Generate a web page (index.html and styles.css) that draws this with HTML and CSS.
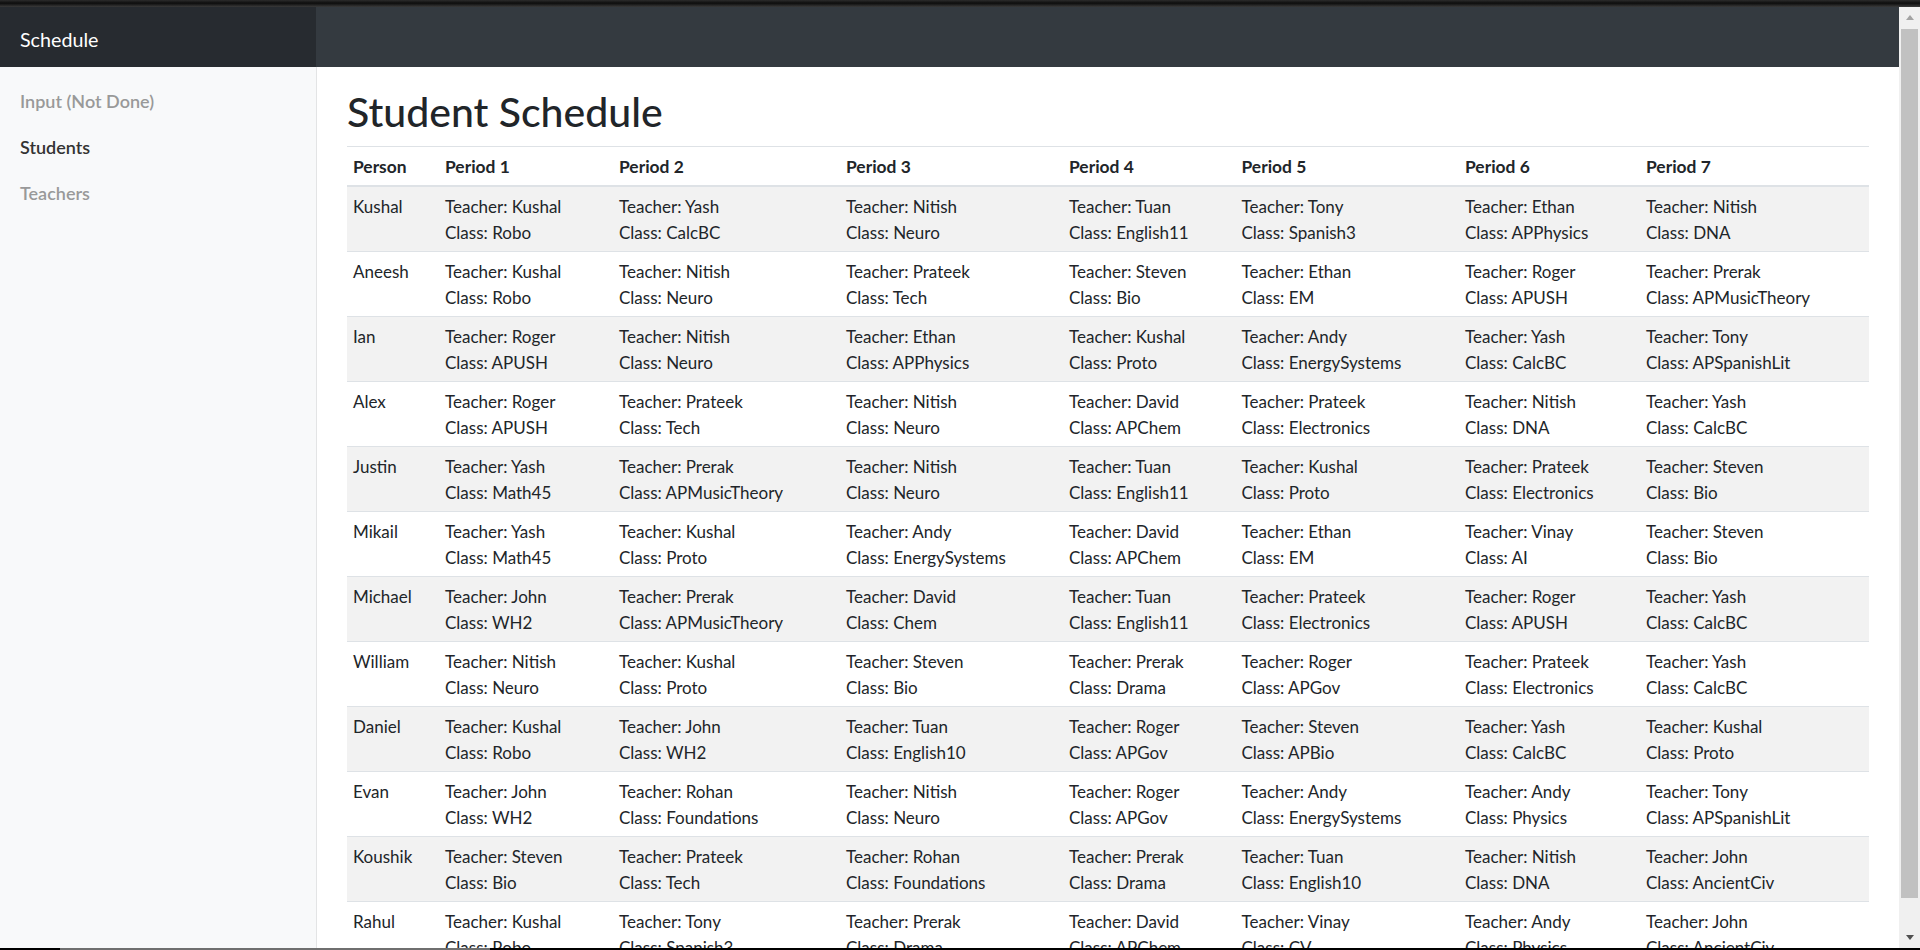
FILE: index.html
```html
<!DOCTYPE html>
<html lang="en">
<head>
  <meta charset="UTF-8" />
  <meta name="viewport" content="width=device-width, initial-scale=1.0"/>
  <title>Schedule</title>
  <link rel="stylesheet" href="styles.css">
</head>
<body>

  <div class="screen">
    <div class="frame-top"></div>

    <div class="viewport">
      <div class="page">

        <header class="navbar">
          <div class="brand">Schedule</div>
        </header>

        <div class="layout">
          <nav class="sidebar">
            <a class="nav-link" href="#">Input (Not Done)</a>
            <a class="nav-link active" href="#">Students</a>
            <a class="nav-link" href="#">Teachers</a>
          </nav>

          <main class="main">
            <h1 class="title">Student Schedule</h1>

            <table class="schedule">
              <colgroup>
                <col class="c-person">
                <col class="c-p1">
                <col class="c-p2">
                <col class="c-p3">
                <col class="c-p4">
                <col class="c-p5">
                <col class="c-p6">
                <col class="c-p7">
              </colgroup>
              <thead>
                <tr>
                  <th>Person</th>
                  <th>Period 1</th>
                  <th>Period 2</th>
                  <th>Period 3</th>
                  <th>Period 4</th>
                  <th>Period 5</th>
                  <th>Period 6</th>
                  <th>Period 7</th>
                </tr>
              </thead>
              <tbody>
                <tr>
                  <td>Kushal</td>
                  <td>Teacher: Kushal<br>Class: Robo</td>
                  <td>Teacher: Yash<br>Class: CalcBC</td>
                  <td>Teacher: Nitish<br>Class: Neuro</td>
                  <td>Teacher: Tuan<br>Class: English11</td>
                  <td>Teacher: Tony<br>Class: Spanish3</td>
                  <td>Teacher: Ethan<br>Class: APPhysics</td>
                  <td>Teacher: Nitish<br>Class: DNA</td>
                </tr>
                <tr>
                  <td>Aneesh</td>
                  <td>Teacher: Kushal<br>Class: Robo</td>
                  <td>Teacher: Nitish<br>Class: Neuro</td>
                  <td>Teacher: Prateek<br>Class: Tech</td>
                  <td>Teacher: Steven<br>Class: Bio</td>
                  <td>Teacher: Ethan<br>Class: EM</td>
                  <td>Teacher: Roger<br>Class: APUSH</td>
                  <td>Teacher: Prerak<br>Class: APMusicTheory</td>
                </tr>
                <tr>
                  <td>Ian</td>
                  <td>Teacher: Roger<br>Class: APUSH</td>
                  <td>Teacher: Nitish<br>Class: Neuro</td>
                  <td>Teacher: Ethan<br>Class: APPhysics</td>
                  <td>Teacher: Kushal<br>Class: Proto</td>
                  <td>Teacher: Andy<br>Class: EnergySystems</td>
                  <td>Teacher: Yash<br>Class: CalcBC</td>
                  <td>Teacher: Tony<br>Class: APSpanishLit</td>
                </tr>
                <tr>
                  <td>Alex</td>
                  <td>Teacher: Roger<br>Class: APUSH</td>
                  <td>Teacher: Prateek<br>Class: Tech</td>
                  <td>Teacher: Nitish<br>Class: Neuro</td>
                  <td>Teacher: David<br>Class: APChem</td>
                  <td>Teacher: Prateek<br>Class: Electronics</td>
                  <td>Teacher: Nitish<br>Class: DNA</td>
                  <td>Teacher: Yash<br>Class: CalcBC</td>
                </tr>
                <tr>
                  <td>Justin</td>
                  <td>Teacher: Yash<br>Class: Math45</td>
                  <td>Teacher: Prerak<br>Class: APMusicTheory</td>
                  <td>Teacher: Nitish<br>Class: Neuro</td>
                  <td>Teacher: Tuan<br>Class: English11</td>
                  <td>Teacher: Kushal<br>Class: Proto</td>
                  <td>Teacher: Prateek<br>Class: Electronics</td>
                  <td>Teacher: Steven<br>Class: Bio</td>
                </tr>
                <tr>
                  <td>Mikail</td>
                  <td>Teacher: Yash<br>Class: Math45</td>
                  <td>Teacher: Kushal<br>Class: Proto</td>
                  <td>Teacher: Andy<br>Class: EnergySystems</td>
                  <td>Teacher: David<br>Class: APChem</td>
                  <td>Teacher: Ethan<br>Class: EM</td>
                  <td>Teacher: Vinay<br>Class: AI</td>
                  <td>Teacher: Steven<br>Class: Bio</td>
                </tr>
                <tr>
                  <td>Michael</td>
                  <td>Teacher: John<br>Class: WH2</td>
                  <td>Teacher: Prerak<br>Class: APMusicTheory</td>
                  <td>Teacher: David<br>Class: Chem</td>
                  <td>Teacher: Tuan<br>Class: English11</td>
                  <td>Teacher: Prateek<br>Class: Electronics</td>
                  <td>Teacher: Roger<br>Class: APUSH</td>
                  <td>Teacher: Yash<br>Class: CalcBC</td>
                </tr>
                <tr>
                  <td>William</td>
                  <td>Teacher: Nitish<br>Class: Neuro</td>
                  <td>Teacher: Kushal<br>Class: Proto</td>
                  <td>Teacher: Steven<br>Class: Bio</td>
                  <td>Teacher: Prerak<br>Class: Drama</td>
                  <td>Teacher: Roger<br>Class: APGov</td>
                  <td>Teacher: Prateek<br>Class: Electronics</td>
                  <td>Teacher: Yash<br>Class: CalcBC</td>
                </tr>
                <tr>
                  <td>Daniel</td>
                  <td>Teacher: Kushal<br>Class: Robo</td>
                  <td>Teacher: John<br>Class: WH2</td>
                  <td>Teacher: Tuan<br>Class: English10</td>
                  <td>Teacher: Roger<br>Class: APGov</td>
                  <td>Teacher: Steven<br>Class: APBio</td>
                  <td>Teacher: Yash<br>Class: CalcBC</td>
                  <td>Teacher: Kushal<br>Class: Proto</td>
                </tr>
                <tr>
                  <td>Evan</td>
                  <td>Teacher: John<br>Class: WH2</td>
                  <td>Teacher: Rohan<br>Class: Foundations</td>
                  <td>Teacher: Nitish<br>Class: Neuro</td>
                  <td>Teacher: Roger<br>Class: APGov</td>
                  <td>Teacher: Andy<br>Class: EnergySystems</td>
                  <td>Teacher: Andy<br>Class: Physics</td>
                  <td>Teacher: Tony<br>Class: APSpanishLit</td>
                </tr>
                <tr>
                  <td>Koushik</td>
                  <td>Teacher: Steven<br>Class: Bio</td>
                  <td>Teacher: Prateek<br>Class: Tech</td>
                  <td>Teacher: Rohan<br>Class: Foundations</td>
                  <td>Teacher: Prerak<br>Class: Drama</td>
                  <td>Teacher: Tuan<br>Class: English10</td>
                  <td>Teacher: Nitish<br>Class: DNA</td>
                  <td>Teacher: John<br>Class: AncientCiv</td>
                </tr>
                <tr>
                  <td>Rahul</td>
                  <td>Teacher: Kushal<br>Class: Robo</td>
                  <td>Teacher: Tony<br>Class: Spanish3</td>
                  <td>Teacher: Prerak<br>Class: Drama</td>
                  <td>Teacher: David<br>Class: APChem</td>
                  <td>Teacher: Vinay<br>Class: CV</td>
                  <td>Teacher: Andy<br>Class: Physics</td>
                  <td>Teacher: John<br>Class: AncientCiv</td>
                </tr>
              </tbody>
            </table>
          </main>
        </div>

      </div>

      <div class="scrollbar">
        <div class="scroll-btn up"></div>
        <div class="scroll-track">
          <div class="scroll-thumb"></div>
        </div>
        <div class="scroll-btn down"></div>
      </div>
    </div>

    <div class="frame-bottom"></div>
  </div>

</body>
</html>
```

FILE: styles.css
```css
body {
  margin: 0;
  font-family: Lato, "Open Sans", sans-serif;
  color: #212529;
  background: #000;
}
.screen {
  height: 950px;
  display: flex;
  flex-direction: column;
  overflow: hidden;
}
.frame-top {
  height: 7px;
  background: linear-gradient(to bottom, #2b2b2b, #0d0d0d 45%, #3a3a3a);
}
.frame-bottom {
  height: 2px;
  background: linear-gradient(to right, #000 60px, #6f6f6f 60px, #6f6f6f 490px, #000 490px);
}
.viewport {
  flex: 1;
  display: flex;
  min-height: 0;
}
.page {
  flex: 1;
  display: flex;
  flex-direction: column;
  overflow: hidden;
  background: #fff;
}

/* top bar */
.navbar {
  height: 60px;
  flex-shrink: 0;
  background-color: #343a40;
  display: flex;
}
.brand {
  width: 276px;
  padding: 21px 20px 15px;
  line-height: 24px;
  font-size: 19.7px;
  color: #fff;
  background-color: #272b30;
}

/* sidebar + content */
.layout {
  flex: 1;
  display: flex;
  min-height: 0;
}
.sidebar {
  width: 316px;
  flex-shrink: 0;
  background: #f8f9fa;
  border-right: 1px solid #e3e4e5;
  padding-top: 11px;
  display: flex;
  flex-direction: column;
}
.nav-link {
  padding: 10px 20px;
  line-height: 26px;
  font-size: 18px;
  font-weight: 600;
  color: #999;
  text-decoration: none;
}
.nav-link.active {
  color: #333;
}
.main {
  flex: 1;
  padding: 20px 30px 0;
  min-width: 0;
}
.title {
  margin: 0 0 10px;
  font-size: 41px;
  line-height: 49px;
  font-weight: 500;
}

/* schedule table */
.schedule {
  width: 100%;
  table-layout: fixed;
  border-collapse: collapse;
  font-size: 17px;
  line-height: 26px;
}
.c-person { width: 92px; }
.c-p1 { width: 174px; }
.c-p2 { width: 227px; }
.c-p3 { width: 223px; }
.c-p4 { width: 172.5px; }
.c-p5 { width: 223.5px; }
.c-p6 { width: 181px; }
.c-p7 { width: 229px; }
.schedule th,
.schedule td {
  padding: 7px 6px 5px;
  text-align: left;
  vertical-align: top;
  border-top: 1px solid #dee2e6;
  white-space: nowrap;
}
.schedule th {
  font-weight: 700;
  font-size: 17.4px;
  border-bottom: 2px solid #dee2e6;
}
.schedule tbody tr:nth-child(odd) {
  background-color: #f2f2f2;
}

/* fake window scrollbar */
.scrollbar {
  width: 21px;
  flex-shrink: 0;
  background: #f0f0f0;
  display: flex;
  flex-direction: column;
}
.scroll-btn {
  height: 21px;
  flex-shrink: 0;
  display: flex;
  justify-content: center;
  align-items: center;
}
.scroll-btn::before {
  content: "";
  border-left: 4.5px solid transparent;
  border-right: 4.5px solid transparent;
}
.scroll-btn.up::before {
  border-bottom: 5px solid #a3a3a3;
}
.scroll-btn.down::before {
  border-top: 5px solid #505050;
}
.scroll-track {
  flex: 1;
  padding: 1px 2px 29px;
}
.scroll-thumb {
  height: 100%;
  background: #c1c1c1;
}
```
